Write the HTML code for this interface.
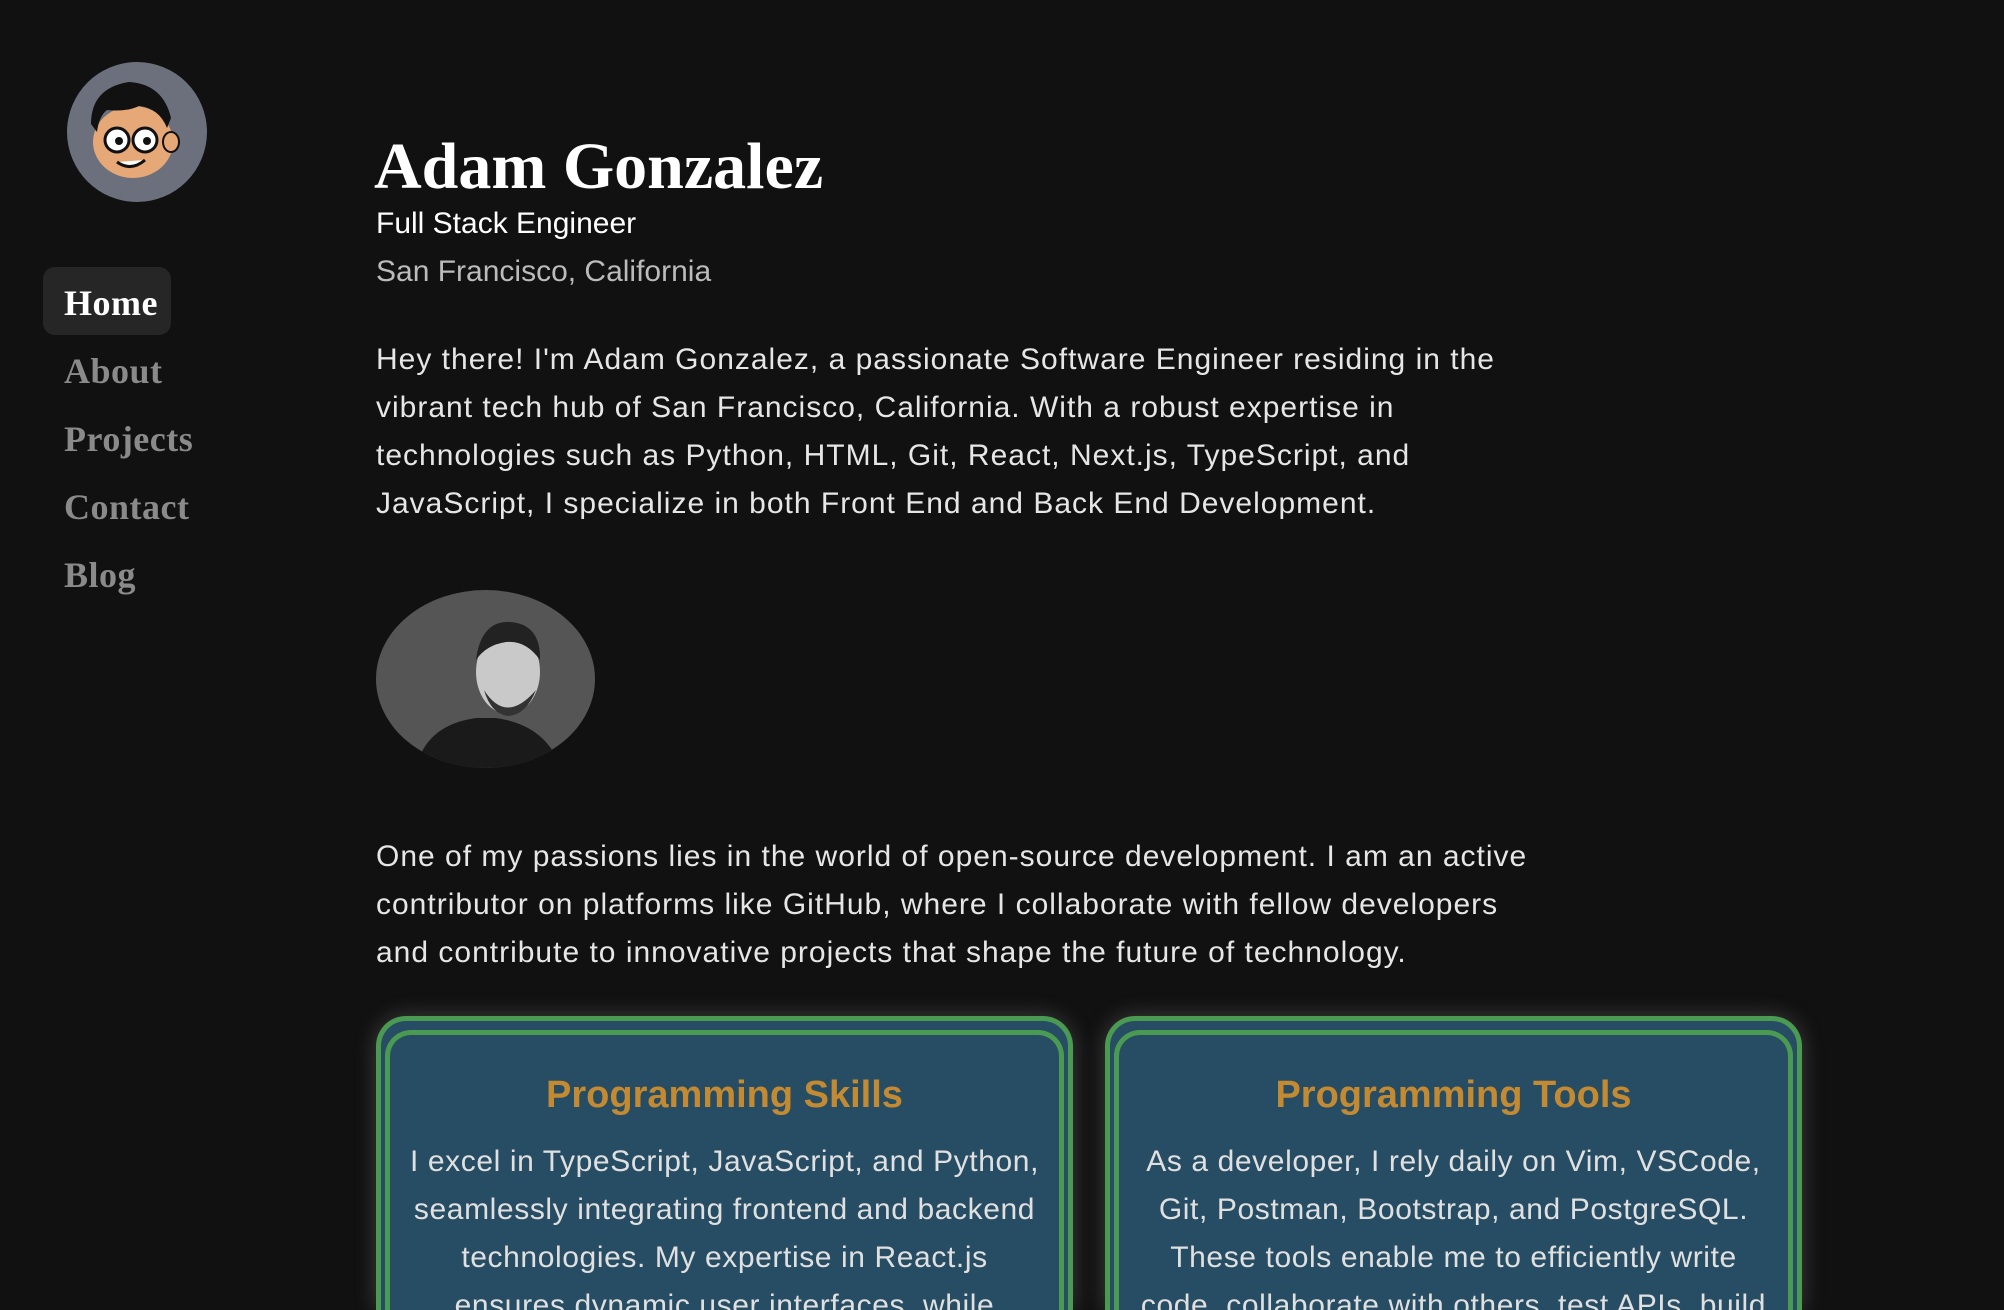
<!DOCTYPE html>
<html><head><meta charset="utf-8"><style>
*{margin:0;padding:0;box-sizing:border-box}
html{overflow:hidden;height:1310px}
body{width:2004px;height:1310px;background:#111111;overflow:hidden;position:relative;font-family:"Liberation Sans",sans-serif;color:#e8e8e8}
.nav a{position:absolute;left:64px;font-family:"Liberation Serif",serif;font-size:36px;color:#8a8a8a;text-decoration:none;font-weight:bold;letter-spacing:0.5px}
.pill{position:absolute;left:43px;top:267px;width:128px;height:68px;background:#262626;border-radius:12px}
.p{position:absolute;left:376px;font-size:30px;line-height:48px;color:#e6e6e6;width:1162px;letter-spacing:1px}
.card{position:absolute;top:1016px;width:697px;height:294px;border:5px solid #4b9a52;border-bottom:none;border-radius:30px 30px 0 0;background:#264d63;box-shadow:0 0 22px rgba(200,200,200,.25)}
.inner{position:absolute;left:4px;right:4px;top:9px;bottom:0;border:5px solid #4b9a52;border-bottom:none;border-radius:26px 26px 0 0;background:#264d63;text-align:center;padding:0 16px;overflow:hidden}
.inner h3{font-size:38px;color:#c48a32;font-weight:bold;margin-top:37px;line-height:46px}
.inner p{font-size:30px;line-height:48px;color:#e0e0e0;margin-top:20px;font-weight:300;letter-spacing:0.6px}
</style></head><body>
<svg style="position:absolute;left:67px;top:62px" width="140" height="140" viewBox="0 0 140 140">
<circle cx="70" cy="70" r="70" fill="#6b707c"/>
<ellipse cx="66" cy="80" rx="40" ry="36" fill="#e7a878"/>
<path d="M24 62 Q24 26 62 20 Q96 22 104 56 L100 66 Q92 46 72 44 Q60 50 40 48 Q32 54 30 70 Z" fill="#111"/>
<circle cx="50" cy="78" r="12" fill="#fff" stroke="#111" stroke-width="3"/>
<circle cx="78" cy="78" r="12" fill="#fff" stroke="#111" stroke-width="3"/>
<circle cx="52" cy="79" r="4" fill="#111"/><circle cx="80" cy="79" r="4" fill="#111"/>
<path d="M50 100 Q64 110 78 98" stroke="#111" stroke-width="3" fill="#fff"/>
<ellipse cx="104" cy="80" rx="8" ry="10" fill="#e7a878" stroke="#111" stroke-width="2"/>
</svg>
<div class="pill"></div>
<div class="nav">
<a style="top:282px;color:#fff">Home</a>
<a style="top:350px">About</a>
<a style="top:418px">Projects</a>
<a style="top:486px">Contact</a>
<a style="top:554px">Blog</a>
</div>
<div style="position:absolute;left:374px;top:129px;font-family:'Liberation Serif',serif;font-size:66px;color:#fff;line-height:76px;font-weight:bold">Adam Gonzalez</div>
<div style="position:absolute;left:376px;top:207px;font-size:30px;color:#fff">Full Stack Engineer</div>
<div style="position:absolute;left:376px;top:255px;font-size:30px;color:#bbb;font-weight:300">San Francisco, California</div>
<div class="p" style="top:336px">Hey there! I'm Adam Gonzalez, a passionate Software Engineer residing in the vibrant tech hub of San Francisco, California. With a robust expertise in technologies such as Python, HTML, Git, React, Next.js, TypeScript, and JavaScript, I specialize in both Front End and Back End Development.</div>
<svg style="position:absolute;left:376px;top:590px" width="219" height="178" viewBox="0 0 219 178">
<defs><clipPath id="c"><ellipse cx="109.5" cy="89" rx="109.5" ry="89"/></clipPath></defs>
<g clip-path="url(#c)">
<rect width="219" height="178" fill="#555"/>
<path d="M40 178 Q50 135 100 128 L120 128 Q170 135 185 178Z" fill="#1a1a1a"/>
<ellipse cx="132" cy="82" rx="32" ry="42" fill="#c9c9c9"/>
<path d="M100 70 Q105 30 135 32 Q165 35 164 70 Q150 50 130 52 Q110 55 100 70Z" fill="#222"/>
<path d="M108 100 Q130 135 160 100 Q150 125 132 126 Q115 124 108 100Z" fill="#333"/>
</g></svg>
<div class="p" style="top:833px">One of my passions lies in the world of open-source development. I am an active contributor on platforms like GitHub, where I collaborate with fellow developers and contribute to innovative projects that shape the future of technology.</div>
<div class="card" style="left:376px"><div class="inner"><h3>Programming Skills</h3><p>I excel in TypeScript, JavaScript, and Python, seamlessly integrating frontend and backend technologies. My expertise in React.js ensures dynamic user interfaces, while</p></div></div>
<div class="card" style="left:1105px"><div class="inner"><h3>Programming Tools</h3><p>As a developer, I rely daily on Vim, VSCode, Git, Postman, Bootstrap, and PostgreSQL. These tools enable me to efficiently write code, collaborate with others, test APIs, build</p></div></div>
</body></html>
